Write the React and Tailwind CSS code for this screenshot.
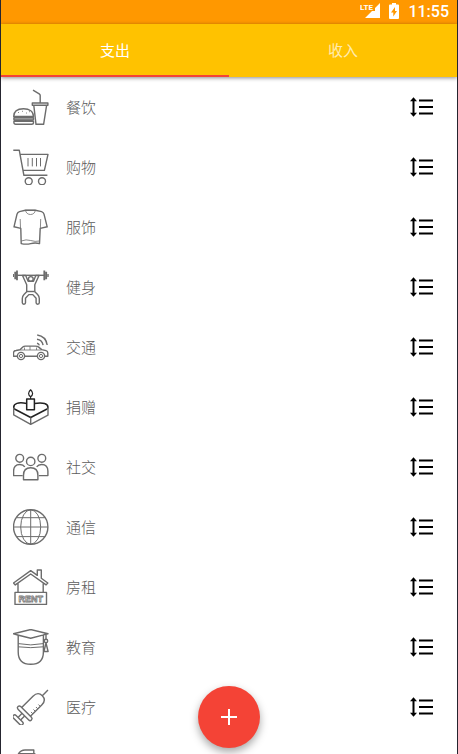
import React from "react";

const drawings = {
  food: (
    <>
      <path d="M.7 27.5C.7 22.5 4.5 19.7 10.5 19.7s10 2.8 10 7.8z" />
      <path d="M5 23.5h1M9 22.3h1M13 24h1M16 22.7h1" strokeWidth=".8" />
      <rect x=".9" y="28.2" width="19.6" height="3" rx="1" fill="#999" />
      <path d="M.9 32.2h19.6v1.3q0 1.8-1.8 1.8H2.7Q.9 35.3.9 33.5z" />
      <path d="M19.3 14h15.6v2.3H19.3zM20.8 16.3l2.2 19h7.6l3-19M27.2 14V6.6q0-1-1-1.7L20 1.2" />
    </>
  ),
  cart: (
    <>
      <path d="M.3 1.3h6l4.6 25h23.5M7 5.4h28l-3.6 16H10z" />
      <path d="M15 9v8.4M19.3 9v8.4M23.5 9v8.4M27.5 9v8.4" strokeWidth="1" />
      <circle cx="15.7" cy="32.2" r="3.5" />
      <circle cx="29" cy="32.2" r="3.5" />
    </>
  ),
  shirt: (
    <>
      <path d="M12.3 1.2 6.5 2.6Q4.6 3.2 4 5.2L1 17.8l6.8 1.6.4 15.2q5 1.1 9.5 0t8.8 0l.7-15.2 7-1.6L31 5.2q-.5-2-2.4-2.6l-6.2-1.4z" />
      <path d="M12.3 1.2q1.3 4.3 5.2 4.3t5-4.3M12.3 1.2h10.2M8.2 32q5-2 9.5-.5t8.8.5M7.5 19l-.3-9M27.4 19l.3-9" strokeWidth=".8" />
    </>
  ),
  fitness: (
    <>
      <path d="M4 6.3h27.5" />
      <path d="M2.2 2.8v7.4M4 1.5v9.8M31.3 1.5v9.8M33.2 2.8v7.4" strokeWidth="1.8" />
      <path d="M.3 5v3M35 5v3" />
      <path d="m9.5 6.5 4.2 9.2v7L11 25.5q-1.7 1.7-1.7 4v4.3q0 1.4 1.6 1.4t1.6-1.4v-4.5l3.3-3.7h4l3.3 3.7v4.5q0 1.4 1.6 1.4t1.6-1.4v-4.3q0-2.3-1.7-4l-2.8-2.8v-7l4.2-9.2h-3.2l-2.3 5.8h-5.4l-2.4-5.8z" />
      <path d="M14 22.5h7.5" />
      <circle cx="17.8" cy="10" r="2.4" />
    </>
  ),
  car: (
    <>
      <path d="M4.5 27.3H.5v-3.5Q.7 21.7 3 21.5l4-.7 2.8-2.8q1-.9 2.5-.9h10.2q2 0 3.2 1l3 2.5 4.3 1q1.8.5 1.8 2.4v3.3h-3.3M11.7 27.3h12.7" />
      <path d="M7.3 21h21M17 17.2V21M11.5 18.5V21M23.5 18.5V21" strokeWidth=".8" />
      <circle cx="8" cy="27" r="3.6" />
      <circle cx="8" cy="27" r="1.6" strokeWidth="1" />
      <circle cx="28" cy="27" r="3.6" />
      <circle cx="28" cy="27" r="1.6" strokeWidth="1" />
      <path d="M24 14.2q2 .4 2.3 2.2M24 10.2q5.2.6 6.1 6M24.2 6q8.7 1.2 10 10" />
    </>
  ),
  cake: (
    <>
      <g stroke="#222" strokeWidth="1.5">
        <path d="M13.7 14.4Q.7 12.3.7 18.4q0 1.2 1.7 2.1l15.3 8 15.4-8q1.9-1 1.9-2.1 0-5.8-13.6-4" />
        <path d="M13.7 10h7.7v10.8h-7.7z" />
        <path d="M17.6 7.8V10M17.6 7.8q-2-1.3-2-3.2t2-3.8q2 1.9 2 3.8t-2 3.2z" strokeWidth="1.2" />
      </g>
      <path d="M.7 18.7v7.2l17 9.4L35 26.2v-7.5M17.7 28.5v6.5" />
    </>
  ),
  people: (
    <>
      <circle cx="6.7" cy="9.3" r="3.9" />
      <circle cx="28.8" cy="9.3" r="3.9" />
      <circle cx="17.7" cy="12.4" r="4.2" />
      <path d="M9.7 26.6H.6V22q0-6.5 6.2-6.5 3.5 0 5 2.3M25.8 26.6h9.1V22q0-6.5-6.2-6.5-3.5 0-5 2.3" />
      <path d="M10.5 30.7v-4.5q0-7.4 7.2-7.4t7.2 7.4v4.5z" />
    </>
  ),
  globe: (
    <>
      <circle cx="17.7" cy="18" r="17.2" />
      <path d="M17.7.8v34.4M.5 18h34.4M3.4 8.7h28.6M3.4 27.6h28.6" strokeWidth="1" />
      <ellipse cx="17.7" cy="18" rx="10" ry="17.2" strokeWidth="1" />
    </>
  ),
  rent: (
    <>
      <path d="M17.7 1.6.5 14l1.8 1.9L17.7 5l15.4 10.9 1.7-1.9-6.5-4.7V1h-4v5.4zM5 14.5v8.8M30.2 14.5v8.8M2 23.4h31.5v12H2z" />
      <text x="17.7" y="32.6" textAnchor="middle" fontSize="9" fontWeight="700" fontFamily="Liberation Sans, Arial, sans-serif" fill="#fff" stroke="#777" strokeWidth=".8">RENT</text>
    </>
  ),
  school: (
    <>
      <path d="M.5 4.8 17.7.5 35 4.8q-2 .3-5.3 1.3l-12 3.2L5.6 6.2zM5.2 6.2v16.5q0 12.6 12.6 12.6t12.6-12.6V6.2" />
      <path d="M5.2 14.6q12.5 2.6 25.2 0M5.2 17.8q12.5 1.7 25.2 0" strokeWidth="1" />
      <path d="M33 5.3V10M33 14l-2.1 8.5h4.2z" />
      <circle cx="33" cy="12" r="1.7" />
    </>
  ),
  syringe: (
    <g transform="translate(18 18) rotate(45)">
      <path d="M0-24v8M-6.2 7v-16q0-7 6.2-7t6.2 7V7" />
      <path d="M6-7H3.5M6-3.5H3.5M6 0H3.5M6 3.5H3.5" strokeWidth=".9" />
      <rect x="-9.5" y="7" width="19" height="3.8" rx="1.9" />
      <path d="M-1.8 10.8v5.7M1.8 10.8v5.7" />
      <rect x="-6.5" y="16.5" width="13" height="3.8" rx="1.9" />
    </g>
  ),
  bag: <path d="M5.5 4.7Q8 1 12 1h8.8v4.2M5.5 4.7h15.8l9 6v22H3V10z" />,
};

const categories = [
  ["餐饮", "food"],
  ["购物", "cart"],
  ["服饰", "shirt"],
  ["健身", "fitness"],
  ["交通", "car"],
  ["捐赠", "cake"],
  ["社交", "people"],
  ["通信", "globe"],
  ["房租", "rent"],
  ["教育", "school"],
  ["医疗", "syringe"],
  ["", "bag"],
];

function StatusBar() {
  return (
    <div className="flex h-6 shrink-0 items-center justify-end bg-[#ff9800] pr-2 text-white">
      <svg className="mr-2 h-6 w-5" viewBox="0 0 20 24" fill="#fff" aria-hidden="true">
        <path d="M20 3v15H5l7-7h3V8z" />
        <text x="0" y="10" fontSize="8" fontWeight="700" fontFamily="Liberation Sans Narrow, Roboto, sans-serif">LTE</text>
      </svg>
      <svg className="mr-2 h-6 w-3" viewBox="-1 -3 12 24" fill="#fff" aria-hidden="true">
        <path fillRule="evenodd" d="M3 0h4v1.5h2q1 0 1 1V15q0 1-1 1H1q-1 0-1-1V2.5q0-1 1-1h2zM6 4 2 9.500h2.300V13.500L8 8H6z" />
      </svg>
      <span className="font-[Roboto,sans-serif] text-base font-medium leading-6">11:55</span>
    </div>
  );
}

function LineSpacingIcon() {
  return (
    <svg className="h-5 w-6" viewBox="0 0 24 20" fill="none" stroke="#000" strokeWidth="2" aria-hidden="true">
      <path d="M9 3.5h14M9 10h14M9 16.5h14M3.5 3v14" />
      <path d="M3.5.3 7 4.2H0zM3.5 19.7 7 15.8H0z" fill="#000" stroke="none" />
    </svg>
  );
}

export default function App() {
  const [tab, setTab] = React.useState(0);
  return (
    <div className="relative flex h-screen flex-col overflow-hidden border-x border-[#25252f] bg-white font-['Noto_Sans_CJK_SC',sans-serif]">
      <StatusBar />
      <div role="tablist" className="z-10 flex shrink-0 bg-[#ffc200] shadow-[0_1px_4px_rgba(0,0,0,0.45)]">
        {["支出", "收入"].map((name, i) => (
          <button
            key={name}
            type="button"
            role="tab"
            aria-selected={tab === i}
            onClick={() => setTab(i)}
            className={
              tab === i
                ? "h-[53px] flex-1 border-b-2 border-[#f44336] pt-0.5 text-[15px] text-white"
                : "h-[53px] flex-1 border-b-2 border-transparent pt-0.5 text-[15px] text-white/70"
            }
          >
            {name}
          </button>
        ))}
      </div>
      <ul className="min-h-0 flex-1 overflow-y-auto [scrollbar-width:none]">
        {categories.map(([name, icon]) => (
          <li key={icon} className="flex h-[60px] items-center gap-[17px] pl-3 pr-[23px]">
            <svg
              className="h-9 w-9 shrink-0"
              viewBox="0 0 36 36"
              fill="none"
              stroke="#6c6c6c"
              strokeWidth="1.4"
              strokeLinejoin="round"
              aria-hidden="true"
            >
              {drawings[icon]}
            </svg>
            <span className="flex-1 text-[15px] font-light leading-5 text-[#5c5c5c]">{name}</span>
            <button type="button" aria-label="排序">
              <LineSpacingIcon />
            </button>
          </li>
        ))}
      </ul>
      <button
        type="button"
        aria-label="添加"
        className="absolute bottom-1.5 left-1/2 z-20 flex size-[62px] -translate-x-1/2 items-center justify-center rounded-full bg-[#f44336] shadow-[0_4px_8px_rgba(0,0,0,0.35)]"
      >
        <svg className="size-4" viewBox="0 0 16 16" stroke="#fff" strokeWidth="2" aria-hidden="true">
          <path d="M8 0v16M0 8h16" />
        </svg>
      </button>
    </div>
  );
}
